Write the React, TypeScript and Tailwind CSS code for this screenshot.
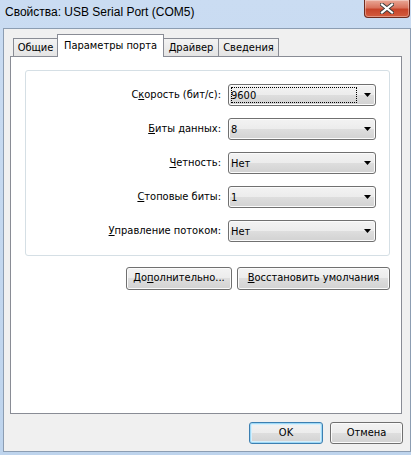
import React from 'react';

type Row = { pre: string; key: string; post: string; value: string; focused?: boolean };

const rows: Row[] = [
  { pre: 'С', key: 'к', post: 'орость (бит/с):', value: '9600', focused: true },
  { pre: '', key: 'Б', post: 'иты данных:', value: '8' },
  { pre: '', key: 'Ч', post: 'етность:', value: 'Нет' },
  { pre: '', key: 'С', post: 'топовые биты:', value: '1' },
  { pre: '', key: 'У', post: 'правление потоком:', value: 'Нет' },
];

const tabs = [
  { label: 'Общие', w: 'w-[45px]' },
  { label: 'Параметры порта', w: 'w-[107px]', active: true },
  { label: 'Драйвер', w: 'w-[56px]' },
  { label: 'Сведения', w: 'w-[61px]' },
];

const btnFace = 'bg-[linear-gradient(#f3f3f3_0%,#ececec_50%,#dedede_50%,#d2d2d2_100%)]';

const Arrow = () => (
  <svg width="7" height="4" viewBox="0 0 7 4" className="shrink-0">
    <polygon points="0,0 7,0 3.5,4" fill="#000" />
  </svg>
);

const Combo = ({ value, focused }: { value: string; focused?: boolean }) => (
  <div
    className={`relative flex h-[22px] w-[148px] items-center rounded-[3px] border border-[#707070] pl-[2px] pr-[4px] shadow-[inset_0_0_0_1px_#fbfbfb] ${btnFace}`}
  >
    <span className="flex-1 leading-none">{value}</span>
    <Arrow />
    {focused && (
      <div className="pointer-events-none absolute top-[2px] bottom-[2px] left-[2px] right-[18px] border border-dotted border-black" />
    )}
  </div>
);

const Button = ({ children, w, isDefault }: { children: React.ReactNode; w: string; isDefault?: boolean }) => (
  <div
    className={`flex items-center justify-center rounded-[3px] border ${w} ${btnFace} ${
      isDefault
        ? 'border-[#3c7fb1] shadow-[inset_0_0_0_1px_#9fd9f6,inset_0_0_0_2px_#d6effc]'
        : 'border-[#707070] shadow-[inset_0_0_0_1px_#fbfbfb]'
    }`}
  >
    {children}
  </div>
);

const CloseButton = () => (
  <div className="mr-[1px] flex h-[18px] w-[46px] items-center justify-center rounded-b-[4px] border border-t-0 border-[#6f2b1e] bg-[linear-gradient(#e9a897_0%,#d9735d_45%,#c7442a_55%,#d35c3e_100%)] shadow-[inset_0_0_0_1px_rgba(255,255,255,0.35)]">
    <svg width="14" height="11" viewBox="0 0 14 11">
      <path d="M2 1.5 L12 9.5 M12 1.5 L2 9.5" stroke="#3b3b3b" strokeWidth="4" strokeLinecap="square" />
      <path d="M2 1.5 L12 9.5 M12 1.5 L2 9.5" stroke="#fff" strokeWidth="2.2" strokeLinecap="square" />
    </svg>
  </div>
);

export default function App() {
  return (
    <div className="flex h-[455px] w-[411px] flex-col overflow-hidden bg-linear-to-b from-[#cadcf2] to-[#bed4ed] font-['DejaVu_Sans_Condensed','Liberation_Sans',sans-serif] text-[11px] text-black">
      {/* title bar */}
      <div className="flex h-[28px] shrink-0 items-start justify-between">
        <span className="pl-[5px] pt-[6px] font-['Liberation_Sans',sans-serif] text-[12px] leading-none">
          Свойства: USB Serial Port (COM5)
        </span>
        <CloseButton />
      </div>

      {/* dialog body */}
      <div className="ml-[3px] flex h-[424px] w-[408px] shrink-0 flex-col border border-[#8c9db2] bg-[#f0f0f0] pt-[5px] pr-[7px] pl-[6px]">
        {/* tab strip */}
        <div className="flex h-[22px] items-end pl-[3px]">
          {tabs.map((t, i) =>
            t.active ? (
              <div
                key={t.label}
                className={`relative z-10 -mb-[1px] flex h-[23px] items-start justify-center border border-b-0 border-[#898c95] bg-white pt-[3px] ${t.w} ${i > 0 ? '-ml-[1px]' : ''}`}
              >
                {t.label}
              </div>
            ) : (
              <div
                key={t.label}
                className={`flex h-[18px] items-center justify-center border border-b-0 border-[#898c95] bg-linear-to-b from-[#f3f3f3] to-[#e4e4e4] pt-[1px] ${t.w} ${i > 0 ? '-ml-[1px]' : ''}`}
              >
                {t.label}
              </div>
            )
          )}
        </div>

        {/* tab page */}
        <div className="h-[358px] w-[392px] border border-[#898c95] bg-white pt-[13px]">
          <div className="ml-[14px] flex h-[186px] w-[365px] flex-col gap-[12px] rounded-[3px] border border-[#d5dfe5] pt-[13px] pr-[13px]">
            {rows.map((r) => (
              <div key={r.post} className="flex items-center justify-end gap-[7px]">
                <span>
                  {r.pre}
                  <u>{r.key}</u>
                  {r.post}
                </span>
                <Combo value={r.value} focused={r.focused} />
              </div>
            ))}
          </div>

          <div className="mt-[11px] ml-[14px] flex w-[365px] justify-end gap-[5px]">
            <Button w="w-[106px] h-[23px]">
              До<u>п</u>олнительно...
            </Button>
            <Button w="w-[153px] h-[23px]">
              <u>В</u>осстановить умолчания
            </Button>
          </div>
        </div>

        {/* dialog buttons */}
        <div className="mt-[8px] flex justify-end gap-[7px]">
          <Button w="w-[74px] h-[22px]" isDefault>
            OK
          </Button>
          <Button w="w-[73px] h-[22px]">Отмена</Button>
        </div>
      </div>
    </div>
  );
}
